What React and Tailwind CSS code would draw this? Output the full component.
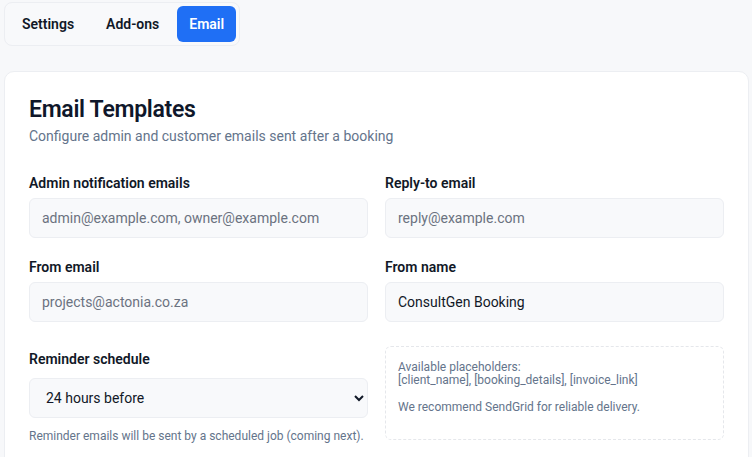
import { useState } from "react";

const FONT = "font-['Roboto','Segoe_UI',sans-serif]";

function Field({ label, placeholder, value }) {
  return (
    <div className="flex flex-col">
      <label className="mb-[5px] text-[14px] font-semibold leading-5 text-[#111827]">{label}</label>
      <input
        defaultValue={value}
        placeholder={placeholder}
        className="h-10 rounded-md border border-[#eceef2] bg-[#f8f9fb] px-3 text-[14px] text-[#111827] outline-none placeholder:text-[#6b7280]"
      />
    </div>
  );
}

export default function App() {
  const [tab, setTab] = useState("email");
  const tabs = [
    { id: "settings", label: "Settings" },
    { id: "addons", label: "Add-ons" },
    { id: "email", label: "Email" },
  ];

  return (
    <div className={`min-h-screen bg-[#f7f8fa] pt-[2px] pr-[3px] pl-1 ${FONT}`}>
      {/* Tabs */}
      <div className="inline-flex gap-1 rounded-lg border border-[#eceef2] bg-[#f8f9fb] p-[3px]">
        {tabs.map(t => (
          <button
            key={t.id}
            onClick={() => setTab(t.id)}
            className={
              t.id === tab
                ? "h-9 rounded-md bg-[#1f6ff5] px-3 text-[14px] font-semibold text-white"
                : "h-9 rounded-md px-[14px] text-[14px] font-semibold text-[#111827]"
            }
          >
            {t.label}
          </button>
        ))}
      </div>

      {/* Card */}
      <div className="mt-[25px] rounded-[10px] border border-[#eceef2] bg-white px-6 pt-[22px] pb-6">
        <h1 className="text-[23px] font-semibold leading-8 tracking-[-0.3px] text-[#0f172a]">Email Templates</h1>
        <p className="text-[14px] leading-5 text-[#64748b]">Configure admin and customer emails sent after a booking</p>

        <div className="mt-[27px] grid grid-cols-2 gap-x-[17px] gap-y-[19px]">
          <Field label="Admin notification emails" placeholder="admin@example.com, owner@example.com" />
          <Field label="Reply-to email" placeholder="reply@example.com" />
          <Field label="From email" placeholder="projects@actonia.co.za" />
          <Field label="From name" value="ConsultGen Booking" />

          <div className="mt-2 flex flex-col">
            <label className="mb-[9px] text-[14px] font-semibold leading-5 text-[#111827]">Reminder schedule</label>
            <select className="h-10 rounded-md border border-[#eceef2] bg-[#f8f9fb] px-3 text-[14px] text-[#111827] outline-none">
              <option>24 hours before</option>
              <option>48 hours before</option>
              <option>1 hour before</option>
            </select>
            <p className="mt-[10px] text-[12px] leading-4 text-[#64748b]">
              Reminder emails will be sent by a scheduled job (coming next).
            </p>
          </div>

          <div className="mt-[5px] h-[94px] rounded-md border border-dashed border-[#e5e7eb] px-3 pt-[14px] text-[12px] leading-[13px] text-[#64748b]">
            <p>Available placeholders:</p>
            <p>[client_name], [booking_details], [invoice_link]</p>
            <p className="mt-[14px]">We recommend SendGrid for reliable delivery.</p>
          </div>
        </div>
      </div>
    </div>
  );
}
